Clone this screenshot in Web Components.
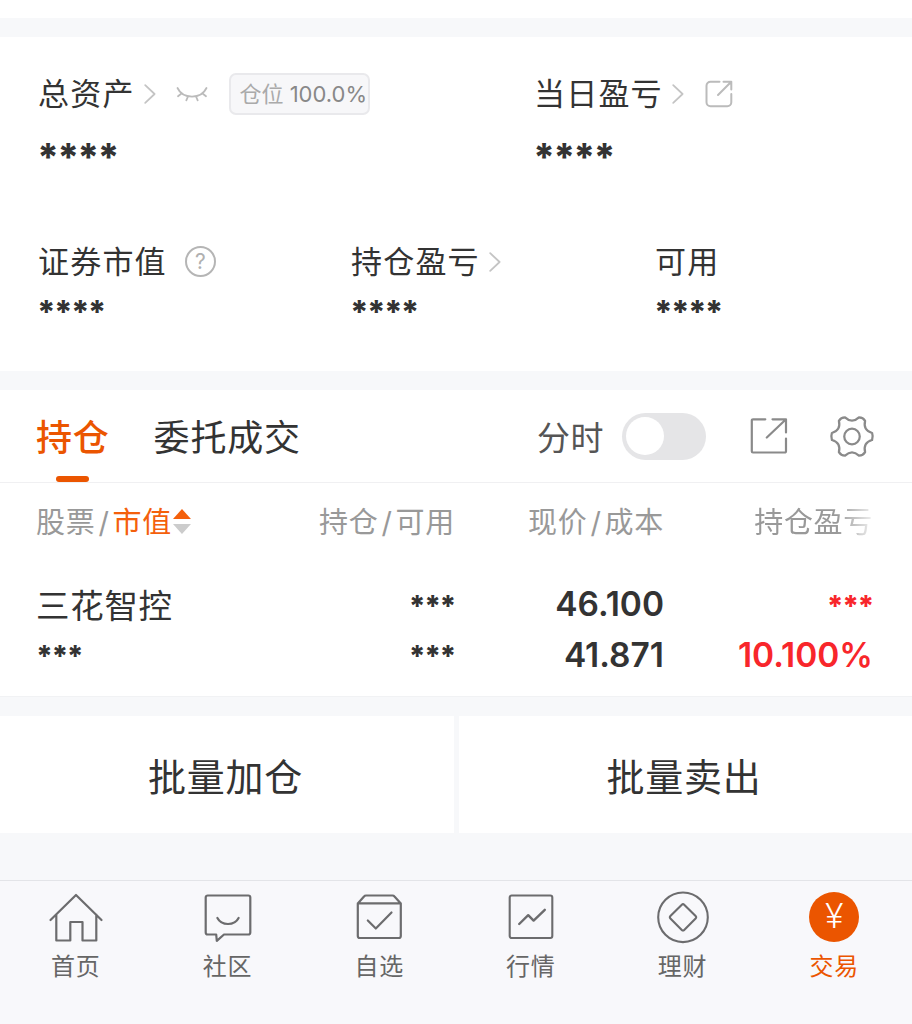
<!DOCTYPE html>
<html lang="zh-CN">
<head>
<meta charset="UTF-8">
<title>交易</title>
<style>
    body {
        margin: 0;
        background: #f7f8fa;
        color: #333;
        font-family: Inter, "Noto Sans CJK SC", sans-serif;
    }
</style>
</head>
<body>
<trade-page></trade-page>

<script>
const ICONS = {
    chevron: [12, 20, '<path d="M1.2 1.2 10.6 10 1.2 18.8" stroke-width="1.8"/>'],
    eye: [32, 16, '<path d="M1.5 2C7 13.500 25 13.500 30.500 2M5.500 7.500 2 10.200M12 10.500 10.300 14.300M20 10.500 21.700 14.300M26.500 7.500 30 10.200" stroke-width="1.8"/>'],
    share: [28, 28, '<path d="M14.500 1.700H5.500a4 4 0 0 0-4 4V22.300a4 4 0 0 0 4 4H22.300a4 4 0 0 0 4-4V14M18.500 1.700H26.300V9.500M26 2 13 15" stroke-width="2"/>'],
    open: [38, 38, '<path d="M15.300 2.300H3a1.200 1.200 0 0 0-1.200 1.200V34.300a1.200 1.200 0 0 0 1.200 1.200H34.800a1.200 1.200 0 0 0 1.200-1.200V21.500M22.500 2.300H36V15.500M35.500 2.800 16.800 20.500" stroke-width="2.200"/>'],
    gear: [46, 46, '<g transform="translate(23 23.500) scale(.97)" stroke-width="2.300"><path d="M20.700 3.650Q11.200 6.450 13.500 16.100Q11.500 19.500 7.200 19.700Q0 12.900-7.200 19.700Q-11.500 19.500-13.500 16.100Q-11.200 6.450-20.700 3.650Q-22 0-20.700-3.650Q-11.200-6.450-13.500-16.100Q-11.500-19.500-7.200-19.700Q0-12.900 7.200-19.700Q11.500-19.500 13.500-16.100Q11.200-6.450 20.700-3.650Q22 0 20.700 3.650Z"/><circle r="8"/></g>'],
    home: [54, 52, '<path d="M1.500 28 27 3 52.500 28M7.300 22.500V48.500H21.300V30H33.500V48.500H47.300V22.500" stroke-width="2.200"/>'],
    chat: [52, 52, '<path d="M5.700 3.500H46.300a2 2 0 0 1 2 2V40.500a2 2 0 0 1-2 2H22L14.800 48.800 14.200 42.500H5.700a2 2 0 0 1-2-2V5.500a2 2 0 0 1 2-2ZM15.400 26C19.500 34 32.500 34 36.600 26" stroke-width="2.200"/>'],
    box: [52, 52, '<path d="M4.800 11.500 11 4.500Q11.800 3.500 13 3.500H39.500Q40.700 3.500 41.500 4.500L47.800 11.500V44a2 2 0 0 1-2 2H6.800a2 2 0 0 1-2-2ZM4.800 11.300H47.800M14.800 28.500 22.800 36.500 38.500 20.500" stroke-width="2.200"/>'],
    chart: [52, 52, '<rect x="4.700" y="3.500" width="42.600" height="42.500" rx="2"/><path d="M14.200 32 23.200 23.200 28.600 28.600 39.800 17.800" stroke-width="2.400"/>'],
    coin: [52, 52, '<circle cx="26" cy="25.300" r="24.800"/><path d="M24.800 12.700Q26 11.500 27.200 12.700L38.600 24.100Q39.800 25.300 38.600 26.500L27.200 37.900Q26 39.100 24.800 37.900L13.400 26.500Q12.200 25.300 13.400 24.100Z"/>']
};

class AppIcon extends HTMLElement {
    connectedCallback() {
        const [w, h, shape] = ICONS[this.getAttribute('name')];
        this.attachShadow({ mode: 'open' });
        this.shadowRoot.innerHTML = `
            <style>
                :host {
                    display: block;
                    flex: none;
                    width: ${w}px;
                    height: ${h}px;
                }

                svg {
                    display: block;
                    overflow: visible;
                }
            </style>
            <svg width="${w}" height="${h}" viewBox="0 0 ${w} ${h}" fill="none" stroke="currentColor" stroke-width="2.1" stroke-linecap="round" stroke-linejoin="round">${shape}</svg>
        `;
    }
}

// Label with its icons, and the masked amount under it
class AssetItem extends HTMLElement {
    connectedCallback() {
        this.attachShadow({ mode: 'open' });
        this.shadowRoot.innerHTML = `
            <style>
                :host {
                    display: block;
                }

                .label {
                    display: flex;
                    align-items: center;
                    height: 44px;
                    font-size: 31px;
                    line-height: 44px;
                    letter-spacing: 1.2px;
                    white-space: nowrap;
                }

                .value {
                    margin: 9px 0 0 -1px;
                    font-size: 32px;
                    line-height: 40px;
                    font-weight: 800;
                    letter-spacing: -1.7px;
                }

                :host([large]) .value {
                    margin-top: 21px;
                    font-size: 38px;
                    letter-spacing: -2px;
                }
            </style>
            <div class="label"><slot></slot></div>
            <div class="value">${this.getAttribute('value')}</div>
        `;
    }
}

class AssetSummary extends HTMLElement {
    connectedCallback() {
        this.attachShadow({ mode: 'open' });
        this.shadowRoot.innerHTML = `
            <style>
                :host {
                    display: block;
                    height: 334px;
                    box-sizing: border-box;
                    padding: 35px 0 0 38px;
                    background: #fff;
                }

                .row {
                    display: grid;
                    grid-template-columns: 496px 1fr;
                    height: 168px;
                }

                .row.three {
                    grid-template-columns: 313px 304px 1fr;
                }

                app-icon {
                    color: #bbb;
                }

                .chevron {
                    margin-left: 9px;
                    color: #c4c4c4;
                }

                .eye {
                    margin-left: 20px;
                }

                .share {
                    margin-left: 21px;
                }

                .badge {
                    display: flex;
                    align-items: center;
                    box-sizing: border-box;
                    width: 141px;
                    height: 42px;
                    margin-left: 21px;
                    padding-left: 9px;
                    border: 2px solid #e9e9ec;
                    border-radius: 7px;
                    background: #f7f7f9;
                    color: #aaa;
                    font-size: 22px;
                    letter-spacing: 0;
                }

                .badge b {
                    margin-left: 6px;
                    color: #888;
                    font-weight: 400;
                }

                .help {
                    display: flex;
                    align-items: center;
                    justify-content: center;
                    box-sizing: border-box;
                    width: 31px;
                    height: 31px;
                    margin: 0 0 1px 18px;
                    border: 2px solid #b5b5b5;
                    border-radius: 50%;
                    color: #b0b0b0;
                    font-size: 21px;
                    letter-spacing: 0;
                }
            </style>
            <div class="row">
                <asset-item large value="****">总资产<app-icon class="chevron" name="chevron"></app-icon><app-icon class="eye" name="eye"></app-icon><span class="badge">仓位<b>100.0%</b></span></asset-item>
                <asset-item large value="****">当日盈亏<app-icon class="chevron" name="chevron"></app-icon><app-icon class="share" name="share"></app-icon></asset-item>
            </div>
            <div class="row three">
                <asset-item value="****">证券市值<span class="help">?</span></asset-item>
                <asset-item value="****">持仓盈亏<app-icon class="chevron" name="chevron"></app-icon></asset-item>
                <asset-item value="****">可用</asset-item>
            </div>
        `;
    }
}

class PositionTabs extends HTMLElement {
    connectedCallback() {
        this.attachShadow({ mode: 'open' });
        this.shadowRoot.innerHTML = `
            <style>
                :host {
                    display: flex;
                    align-items: center;
                    height: 92px;
                    padding: 0 37px 0 36px;
                    border-bottom: 1px solid #f0f0f2;
                    font-size: 36px;
                }

                .tab {
                    position: relative;
                    margin-right: 44px;
                    padding-top: 4px;
                    line-height: 88px;
                    letter-spacing: 0.8px;
                }

                .tab.active {
                    color: #eb5500;
                    font-weight: 500;
                }

                .tab.active::after {
                    content: "";
                    position: absolute;
                    left: 20px;
                    bottom: 0;
                    width: 33px;
                    height: 6px;
                    border-radius: 3px;
                    background: #eb5500;
                }

                .switch-label {
                    margin-left: auto;
                    color: #555;
                    font-size: 33px;
                    letter-spacing: 0.5px;
                }

                .switch {
                    box-sizing: border-box;
                    width: 84px;
                    height: 47px;
                    margin: 0 44px 0 18px;
                    padding: 4px;
                    border-radius: 24px;
                    background: #e5e5e7;
                }

                .knob {
                    width: 38px;
                    height: 38px;
                    border-radius: 50%;
                    background: #fff;
                }

                app-icon {
                    color: #8a8a8a;
                }

                .gear {
                    margin-left: 41px;
                }
            </style>
            <div class="tab active">持仓</div>
            <div class="tab">委托成交</div>
            <div class="switch-label">分时</div>
            <div class="switch"><div class="knob"></div></div>
            <app-icon name="open"></app-icon>
            <app-icon class="gear" name="gear"></app-icon>
        `;
    }
}

class PositionTable extends HTMLElement {
    connectedCallback() {
        this.attachShadow({ mode: 'open' });
        this.shadowRoot.innerHTML = `
            <style>
                :host {
                    display: block;
                    height: 213px;
                    padding: 0 39px 0 36px;
                    border-bottom: 1px solid #f1f2f4;
                }

                .row {
                    display: grid;
                    grid-template-columns: 210px 209px 209px 209px;
                    text-align: right;
                    line-height: 51px;
                    white-space: nowrap;
                }

                .row > :first-child {
                    text-align: left;
                }

                .head {
                    padding-top: 2px;
                    line-height: 75px;
                    color: #999;
                    font-size: 29px;
                    letter-spacing: 0.7px;
                }

                .stock {
                    display: flex;
                    align-items: center;
                }

                .stock i,
                .head span i {
                    padding: 0 3px;
                    font-style: normal;
                }

                .stock em {
                    color: #f4600c;
                    font-style: normal;
                }

                .sort {
                    display: grid;
                    gap: 5px;
                    margin: 0 0 2px 1px;
                }

                .sort::before,
                .sort::after {
                    content: "";
                    width: 18px;
                    height: 10px;
                    background: #f4600c;
                    clip-path: polygon(50% 0, 100% 100%, 0 100%);
                }

                .sort::after {
                    background: #ccc;
                    clip-path: polygon(0 0, 100% 0, 50% 100%);
                }

                .fade {
                    -webkit-mask-image: linear-gradient(to left, transparent -6px, #000 36px);
                    mask-image: linear-gradient(to left, transparent -6px, #000 36px);
                }

                .first {
                    padding-top: 19px;
                }

                .name {
                    height: 50px;
                    font-size: 33.5px;
                    line-height: 54px;
                    letter-spacing: 0.7px;
                }

                .num {
                    font-size: 33.5px;
                    font-weight: 600;
                }

                .mask {
                    height: 50px;
                    font-size: 29px;
                    line-height: 54px;
                    font-weight: 800;
                    letter-spacing: -1.5px;
                }

                .row:last-child .mask {
                    line-height: 52px;
                }

                .up {
                    color: #f8262b;
                }
            </style>
            <div class="row head">
                <span class="stock">股票<i>/</i><em>市值</em><span class="sort"></span></span>
                <span>持仓<i>/</i>可用</span>
                <span>现价<i>/</i>成本</span>
                <span class="fade">持仓盈亏</span>
            </div>
            <div class="row first">
                <span class="name">三花智控</span>
                <span class="mask">***</span>
                <span class="num">46.100</span>
                <span class="mask up">***</span>
            </div>
            <div class="row">
                <span class="mask">***</span>
                <span class="mask">***</span>
                <span class="num">41.871</span>
                <span class="num up">10.100%</span>
            </div>
        `;
    }
}

class BatchActions extends HTMLElement {
    connectedCallback() {
        this.attachShadow({ mode: 'open' });
        this.shadowRoot.innerHTML = `
            <style>
                :host {
                    display: grid;
                    grid-template-columns: 454px 1fr;
                    gap: 5px;
                    height: 117px;
                }

                button {
                    padding: 0 3px 0 0;
                    border: 0;
                    background: #fff;
                    color: #333;
                    font: inherit;
                    font-size: 38px;
                    letter-spacing: 0.8px;
                }
            </style>
            <button>批量加仓</button>
            <button>批量卖出</button>
        `;
    }
}

class NavItem extends HTMLElement {
    connectedCallback() {
        this.attachShadow({ mode: 'open' });
        this.shadowRoot.innerHTML = `
            <style>
                :host {
                    display: flex;
                    flex: 1;
                    flex-direction: column;
                    align-items: center;
                    color: #666;
                    font-size: 24px;
                    line-height: 34px;
                    letter-spacing: 0.8px;
                }

                :host([active]) {
                    color: #eb5500;
                }

                .icon {
                    height: 58px;
                }

                ::slotted(app-icon) {
                    color: #6c6c6e;
                }
            </style>
            <div class="icon"><slot></slot></div>
            <div>${this.getAttribute('label')}</div>
        `;
    }
}

class BottomNav extends HTMLElement {
    connectedCallback() {
        this.attachShadow({ mode: 'open' });
        this.shadowRoot.innerHTML = `
            <style>
                :host {
                    display: flex;
                    box-sizing: border-box;
                    height: 144px;
                    margin-top: 47px;
                    padding: 11px 2px 0 0;
                    border-top: 1px solid #e3e4e8;
                    background: #f8f8fb;
                }

                .yuan {
                    display: flex;
                    align-items: center;
                    justify-content: center;
                    width: 50px;
                    height: 50px;
                    border-radius: 50%;
                    background: #eb5500;
                    color: #fff;
                    font-family: Roboto, sans-serif;
                    font-size: 35px;
                    font-weight: 300;
                    letter-spacing: 0;
                }
            </style>
            <nav-item label="首页"><app-icon name="home"></app-icon></nav-item>
            <nav-item label="社区"><app-icon name="chat"></app-icon></nav-item>
            <nav-item label="自选"><app-icon name="box"></app-icon></nav-item>
            <nav-item label="行情"><app-icon name="chart"></app-icon></nav-item>
            <nav-item label="理财"><app-icon name="coin"></app-icon></nav-item>
            <nav-item label="交易" active><span class="yuan">¥</span></nav-item>
        `;
    }
}

class TradePage extends HTMLElement {
    connectedCallback() {
        this.attachShadow({ mode: 'open' });
        this.shadowRoot.innerHTML = `
            <style>
                :host {
                    display: block;
                    height: 1024px;
                    overflow: hidden;
                }

                .top {
                    height: 18px;
                    margin-bottom: 19px;
                    background: #fff;
                }

                .positions {
                    margin: 19px 0;
                    background: #fff;
                }
            </style>
            <div class="top"></div>
            <asset-summary></asset-summary>
            <section class="positions">
                <position-tabs></position-tabs>
                <position-table></position-table>
            </section>
            <batch-actions></batch-actions>
            <bottom-nav></bottom-nav>
        `;
    }
}

customElements.define('app-icon', AppIcon);
customElements.define('asset-item', AssetItem);
customElements.define('asset-summary', AssetSummary);
customElements.define('position-tabs', PositionTabs);
customElements.define('position-table', PositionTable);
customElements.define('batch-actions', BatchActions);
customElements.define('nav-item', NavItem);
customElements.define('bottom-nav', BottomNav);
customElements.define('trade-page', TradePage);
</script>
</body>
</html>
